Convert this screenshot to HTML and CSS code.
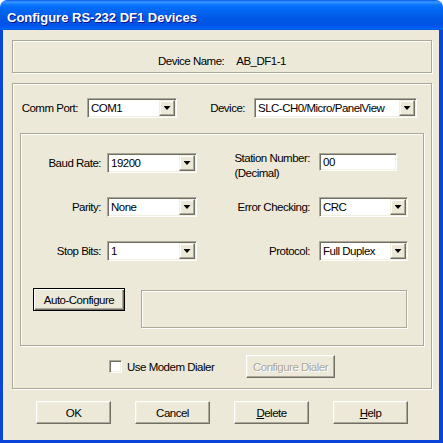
FILE: index.html
```html
<!DOCTYPE html>
<html>
<head>
<meta charset="utf-8">
<link rel="stylesheet" href="styles.css">
</head>
<body>
<div class="window">
  <div class="titlebar"><span class="title">Configure RS-232 DF1 Devices</span></div>
  <div class="client">
    <div class="group name-group"><span>Device Name:</span><span>AB_DF1-1</span></div>
    <div class="group main-group">
      <div class="port-row">
        <span class="lbl">Comm Port:</span>
        <div class="combo"><span class="val">COM1</span><span class="drop"></span></div>
        <span class="lbl">Device:</span>
        <div class="combo"><span class="val">SLC-CH0/Micro/PanelView</span><span class="drop"></span></div>
      </div>
      <div class="group inner-group">
        <div class="settings">
          <span class="lbl lbl-left">Baud Rate:</span>
          <div class="combo"><span class="val">19200</span><span class="drop"></span></div>
          <span class="lbl lbl-right lbl-station">Station Number:<br>(Decimal)</span>
          <div class="field"><span class="val">00</span></div>

          <span class="lbl lbl-left">Parity:</span>
          <div class="combo"><span class="val">None</span><span class="drop"></span></div>
          <span class="lbl lbl-right">Error Checking:</span>
          <div class="combo"><span class="val">CRC</span><span class="drop"></span></div>

          <span class="lbl lbl-left">Stop Bits:</span>
          <div class="combo"><span class="val">1</span><span class="drop"></span></div>
          <span class="lbl lbl-right">Protocol:</span>
          <div class="combo"><span class="val">Full Duplex</span><span class="drop"></span></div>
        </div>
        <div class="auto-row">
          <div class="btn btn-default btn-auto">Auto-Configure</div>
          <div class="status-box"></div>
        </div>
      </div>
      <div class="modem-row">
        <div class="check-label"><span class="checkbox"></span><span>Use Modem Dialer</span></div>
        <div class="btn btn-disabled btn-dialer">Configure Dialer</div>
      </div>
    </div>
    <div class="actions">
      <div class="btn btn-action">OK</div>
      <div class="btn btn-action">Cancel</div>
      <div class="btn btn-action"><span><u>D</u>elete</span></div>
      <div class="btn btn-action"><span><u>H</u>elp</span></div>
    </div>
  </div>
</div>
</body>
</html>
```
FILE: styles.css
```css
* { box-sizing: border-box; }
html, body { margin: 0; padding: 0; background: #ffffff; }
body {
  width: 443px;
  height: 443px;
  overflow: hidden;
  font-family: "Liberation Sans", Arial, sans-serif;
  font-size: 11.5px;
  letter-spacing: -0.5px;
  line-height: 14px;
  color: #000;
}
.window { width: 443px; height: 443px; display: flex; flex-direction: column; }
.titlebar {
  height: 30px;
  flex: none;
  border-radius: 7px 7px 0 0;
  padding: 5px 0 0 7px;
  background: linear-gradient(to bottom, #0058ee 0%, #3a93ff 6%, #288eff 10%, #127dff 14%, #036ffc 20%, #0262ee 44%, #0057e5 60%, #0054e3 76%, #0055eb 86%, #005bf5 92%, #026afe 94%, #0062ef 96%, #0052d6 100%);
}
.title {
  display: block;
  font-family: "Liberation Sans", Arial, sans-serif;
  font-weight: bold;
  font-size: 13px;
  letter-spacing: 0;
  line-height: 25px;
  color: #fff;
  text-shadow: 1px 1px 0 #0f1089;
}
.client {
  flex: 1;
  background: #ece9d8;
  border-style: solid;
  border-color: #0b44d8;
  border-width: 0 4px 3px 3px;
  padding: 10px 0 0 9px;
}
.group {
  border: 1px solid #aca899;
  box-shadow: inset 1px 1px 0 #fff, 1px 1px 0 #fff;
}
.name-group {
  width: 420px;
  height: 33px;
  padding-top: 13px;
  display: flex;
  justify-content: center;
  gap: 12px;
  white-space: nowrap;
}
.main-group {
  width: 420px;
  height: 306px;
  margin-top: 10px;
  padding-top: 14px;
}
.port-row {
  display: grid;
  grid-template-columns: 74px 90px 77px 163px;
  grid-template-rows: 20px;
  align-items: center;
}
.lbl { justify-self: end; padding-right: 9px; white-space: nowrap; }
.combo, .field {
  height: 20px;
  display: flex;
  align-items: center;
  padding: 1px;
  background: #fff;
  border: 1px solid;
  border-color: #aca899 #fff #fff #aca899;
  box-shadow: inset 1px 1px 0 #716f64, inset -1px -1px 0 #f1efe2;
}
.val { flex: 1; padding-left: 2px; white-space: nowrap; overflow: hidden; }
.drop {
  width: 16px;
  height: 16px;
  flex: none;
  display: flex;
  align-items: center;
  justify-content: center;
  background: #ece9d8;
  border: 1px solid;
  border-color: #f1efe2 #716f64 #716f64 #f1efe2;
  box-shadow: inset -1px -1px 0 #aca899, inset 1px 1px 0 #fff;
}
.drop::before {
  content: "";
  width: 7px;
  height: 4px;
  background: #000;
  clip-path: polygon(0 0, 100% 0, 50% 100%);
}
.inner-group {
  width: 404px;
  height: 213px;
  margin: 15px 0 0 7px;
  padding-top: 19px;
}
.settings {
  display: grid;
  grid-template-columns: 86px 90px 122px 89px;
  grid-template-rows: 20px 20px 20px;
  row-gap: 24px;
  align-items: center;
}
.lbl-left { padding-right: 6px; }
.lbl-right { padding-right: 9px; }
.lbl-station { align-self: start; margin-top: -2px; text-align: left; line-height: 15px; }
.field { width: 78px; height: 18px; align-self: start; }
.auto-row {
  display: flex;
  align-items: flex-start;
  margin-top: 27px;
  padding-left: 12px;
}
.btn {
  height: 23px;
  display: flex;
  align-items: center;
  justify-content: center;
  white-space: nowrap;
  background: #ece9d8;
  border: 1px solid;
  border-color: #fff #716f64 #716f64 #fff;
  box-shadow: inset -1px -1px 0 #aca899, inset 1px 1px 0 #f1efe2;
}
.btn-default {
  border: 1px solid #000;
  box-shadow: inset 1px 1px 0 #fff, inset -1px -1px 0 #716f64, inset -2px -2px 0 #aca899;
}
.btn-auto { width: 92px; }
.status-box {
  width: 266px;
  height: 38px;
  margin: 2px 0 0 16px;
  border: 1px solid #aca899;
  box-shadow: inset 1px 1px 0 #fff, 1px 1px 0 #fff;
}
.modem-row {
  display: flex;
  align-items: center;
  margin-top: 9px;
  padding-left: 96px;
}
.check-label { width: 137px; display: flex; align-items: center; white-space: nowrap; }
.checkbox {
  width: 13px;
  height: 13px;
  flex: none;
  margin-right: 5px;
  background: #fff;
  border: 1px solid;
  border-color: #aca899 #fff #fff #aca899;
  box-shadow: inset 1px 1px 0 #716f64, inset -1px -1px 0 #f1efe2;
}
.btn-dialer { width: 89px; }
.btn-disabled { color: #aca899; text-shadow: 1px 1px 0 #fff; }
.actions {
  display: flex;
  gap: 24px;
  margin-top: 12px;
  padding-left: 24px;
}
.btn-action { width: 75px; }
```
